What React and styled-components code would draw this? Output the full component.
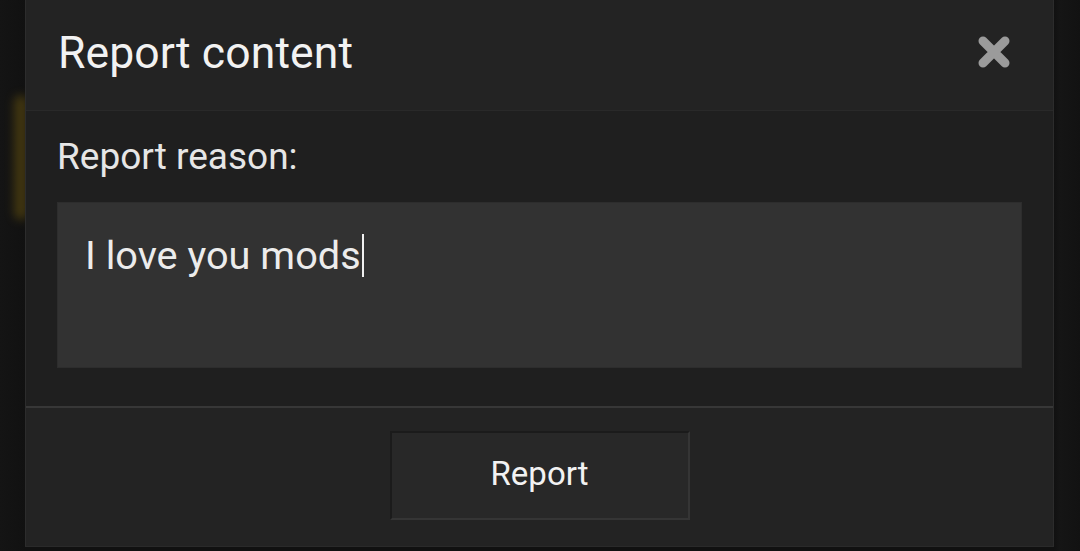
import React from "react";
import styled, { createGlobalStyle } from "styled-components";

const Global = createGlobalStyle`
  html, body { margin: 0; padding: 0; background: #121212; }
  body { font-family: Roboto, "Noto Sans", sans-serif; }
`;

const Page = styled.div`
  position: relative;
  width: 1080px;
  height: 551px;
  box-sizing: border-box;
  padding: 0 26px 4px 25px;
  display: flex;
  background: linear-gradient(90deg, #141414 0, #111 25px, #111 1054px, #151515 1060px, #121212 100%);
  overflow: hidden;
  &::before {
    content: "";
    position: absolute;
    left: 14px;
    top: 95px;
    width: 14px;
    height: 125px;
    border-radius: 8px;
    background: #4a3d10;
    filter: blur(5px);
    opacity: 0.85;
  }
`;

const Modal = styled.div`
  position: relative;
  flex: 1;
  display: flex;
  flex-direction: column;
  background: #1f1f1f;
  border-left: 1px solid #2c2c2c;
  border-right: 1px solid #2c2c2c;
  border-bottom: 1px solid #2a2a2a;
`;

const Header = styled.div`
  height: 111px;
  box-sizing: border-box;
  display: flex;
  align-items: center;
  justify-content: space-between;
  padding: 0 42px 0 32px;
  background: #232323;
  border-bottom: 1px solid #292929;
`;

const Title = styled.h1`
  margin: 0 0 4px;
  font-size: 44.5px;
  font-weight: 400;
  color: #f2f2f2;
  letter-spacing: 0.1px;
`;

const Close = styled.button`
  border: 0;
  background: none;
  padding: 0;
  width: 34px;
  height: 32px;
  display: flex;
  align-items: center;
  justify-content: center;
  margin-bottom: 6px;
  cursor: pointer;
`;

const Body = styled.div`
  flex: 0 0 295px;
  box-sizing: border-box;
  padding: 24px 31px 0 31px;
  display: flex;
  flex-direction: column;
`;

const Label = styled.div`
  font-size: 37px;
  color: #e6e6e6;
  line-height: 44px;
  margin-bottom: 23px;
`;

const Field = styled.div`
  height: 166px;
  box-sizing: border-box;
  background: #323232;
  border: 1px solid #2d2d2d;
  padding: 29px 27px;
  font-size: 39.7px;
  line-height: 48px;
  color: #ececec;
`;

const Caret = styled.span`
  display: inline-block;
  width: 2px;
  height: 43px;
  background: #f0f0f0;
  vertical-align: -8px;
  margin-left: 1px;
`;

const Footer = styled.div`
  flex: 1;
  background: #232323;
  border-top: 2px solid #373737;
  display: flex;
  justify-content: center;
  padding-top: 23px;
`;

const Button = styled.button`
  width: 300px;
  height: 89px;
  box-sizing: border-box;
  background: #282828;
  border-style: solid;
  border-width: 2px;
  border-color: #1b1b1b #353535 #353535 #1b1b1b;
  color: #f2f2f2;
  font-family: Roboto, "Noto Sans", sans-serif;
  font-size: 33px;
  padding: 0 0 4px;
`;

export default function App() {
  return (
    <>
      <Global />
      <Page>
        <Modal>
          <Header>
            <Title>Report content</Title>
            <Close aria-label="Close">
              <svg width="34" height="32" viewBox="0 0 34 32">
                <path d="M6 5 L28 27 M28 5 L6 27" stroke="#9b9b9b" strokeWidth="9" strokeLinecap="round" />
              </svg>
            </Close>
          </Header>
          <Body>
            <Label>Report reason:</Label>
            <Field>
              I love you mods<Caret />
            </Field>
          </Body>
          <Footer>
            <Button>Report</Button>
          </Footer>
        </Modal>
      </Page>
    </>
  );
}
